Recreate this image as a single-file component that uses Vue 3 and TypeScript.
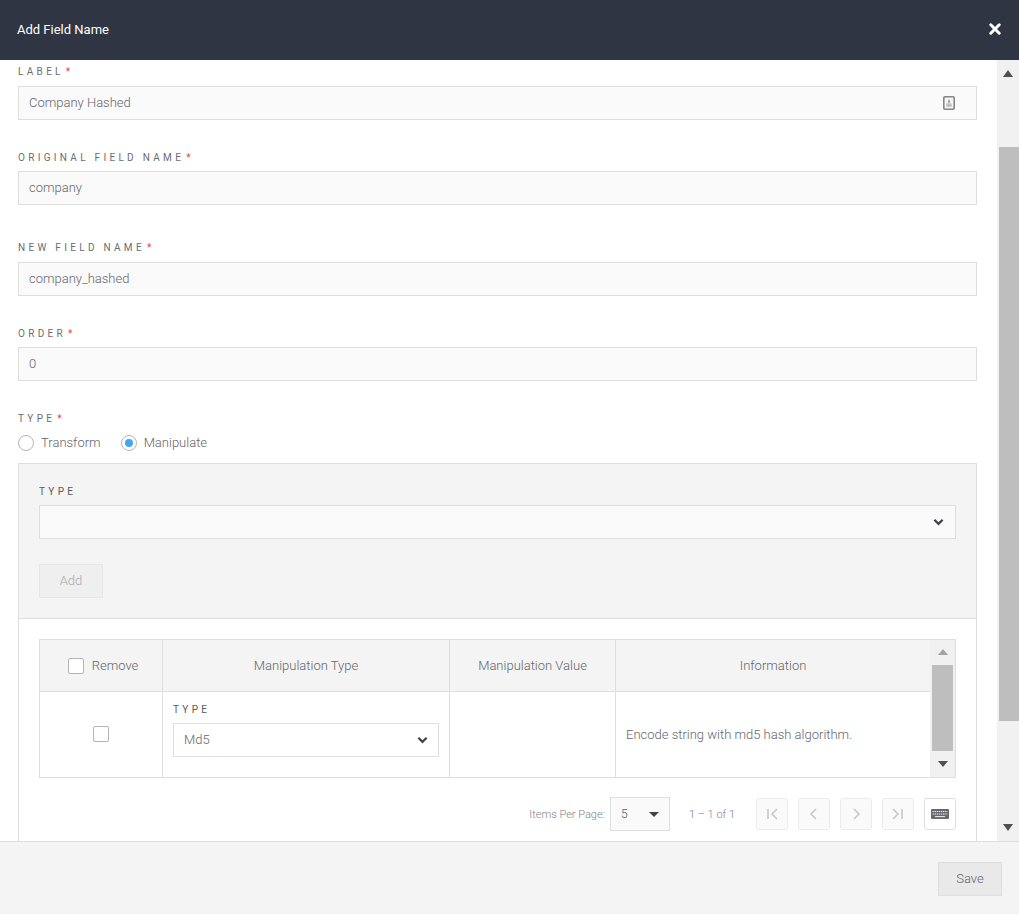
<script setup lang="ts">
const columns: string[] = ['Manipulation Type', 'Manipulation Value', 'Information']
const pagerIcons: string[] = ['M5 4v10M14 4l-5 5 5 5', 'M11 4l-5 5 5 5', 'M7 4l5 5-5 5', 'M4 4l5 5-5 5M13 4v10']
</script>

<template>
  <div class="dialog">
    <header class="head">
      <span class="title">Add Field Name</span>
      <svg class="close" viewBox="0 0 12 12" width="12" height="12"><path d="M1.8 1.8l8.4 8.4M10.2 1.8l-8.4 8.4" /></svg>
    </header>

    <div class="middle">
      <main class="content">
        <label class="field">
          <span class="lab">LABEL<i>*</i></span>
          <span class="input">
            Company Hashed
            <svg class="card" viewBox="0 0 12 14" width="12" height="14">
              <rect x=".8" y=".8" width="10.4" height="12.4" rx="1.2" fill="#f4f4f4" stroke="#858585" stroke-width="1.6" />
              <path d="M6 3l1.2 3.6H4.8z" fill="#808080" />
              <rect x="3.4" y="7.4" width="5.2" height="3.4" fill="#bdbdbd" />
            </svg>
          </span>
        </label>
        <label class="field tight wide">
          <span class="lab">ORIGINAL FIELD NAME<i>*</i></span>
          <span class="input">company</span>
        </label>
        <label class="field">
          <span class="lab">NEW FIELD NAME<i>*</i></span>
          <span class="input">company_hashed</span>
        </label>
        <label class="field tight">
          <span class="lab">ORDER<i>*</i></span>
          <span class="input">0</span>
        </label>

        <div class="lab">TYPE<i>*</i></div>
        <div class="radios">
          <span class="radio"><b class="dot"></b><span class="rtext">Transform</span></span>
          <span class="radio"><b class="dot on"></b><span class="rtext">Manipulate</span></span>
        </div>

        <section class="panel">
          <div class="panel-top">
            <div class="lab dark">TYPE</div>
            <div class="input select">
              <svg class="chev" viewBox="0 0 12 8" width="11" height="8"><path d="M1.5 1.5L6 6l4.5-4.5" /></svg>
            </div>
            <button class="add" type="button">Add</button>
          </div>
          <div class="panel-bottom">
            <div class="table">
              <div class="table-main">
                <div class="row header">
                  <div class="cell c1 remove"><b class="check"></b>Remove</div>
                  <div v-for="(c, i) in columns" :key="c" class="cell" :class="'c' + (i + 2)">{{ c }}</div>
                </div>
                <div class="row body">
                  <div class="cell c1"><b class="check solo"></b></div>
                  <div class="cell c2 typecell">
                    <div class="lab dark">TYPE</div>
                    <div class="input select white">
                      Md5
                      <svg class="chev" viewBox="0 0 12 8" width="11" height="8"><path d="M1.5 1.5L6 6l4.5-4.5" /></svg>
                    </div>
                  </div>
                  <div class="cell c3"></div>
                  <div class="cell c4 info">Encode string with md5 hash algorithm.</div>
                </div>
              </div>
              <div class="bar small">
                <span class="arrow up grey"></span>
                <div class="track"><span class="thumb"></span></div>
                <span class="arrow down"></span>
              </div>
            </div>

            <div class="pager">
              <span class="ipp">Items Per Page:</span>
              <span class="size">5<em></em></span>
              <span class="range">1 – 1 of 1</span>
              <button v-for="d in pagerIcons" :key="d" class="pg" type="button">
                <svg viewBox="0 0 18 18" width="18" height="18"><path :d="d" /></svg>
              </button>
              <button class="pg kb" type="button">
                <svg viewBox="0 0 18 10" width="18" height="10">
                  <rect width="18" height="10" rx="1" fill="#666a70" />
                  <path d="M1.5 2.5h15M1.5 5h15" stroke="#f0f0f0" stroke-width="1" stroke-dasharray="1.4 .7" />
                  <path d="M4 7.6h10" stroke="#f0f0f0" stroke-width="1" />
                </svg>
              </button>
            </div>
          </div>
        </section>
      </main>

      <div class="bar large">
        <span class="arrow up"></span>
        <div class="track"><span class="thumb"></span></div>
        <span class="arrow down"></span>
      </div>
    </div>

    <footer class="foot">
      <button class="save" type="button">Save</button>
    </footer>
  </div>
</template>

<style>
html, body { margin: 0; background: #fff; overflow: hidden; }
</style>

<style scoped>
.dialog { width: 1019px; height: 914px; display: flex; flex-direction: column; font-family: Roboto, "Liberation Sans", sans-serif; font-size: 13px; font-weight: 300; color: #63666c; }
.head { height: 60px; flex: none; background: #2f3542; display: flex; align-items: center; justify-content: space-between; padding: 0 18px 2px 17px; box-sizing: border-box; }
.title { color: #fff; font-size: 13px; font-weight: 400; }
.close { fill: none; stroke: #fff; stroke-width: 3; stroke-linecap: round; margin-bottom: 1px; }
.middle { flex: 1; min-height: 0; display: flex; overflow: hidden; }
.content { width: 997px; flex: none; box-sizing: border-box; padding: 5px 20px 0 18px; overflow: hidden; }
.field { display: block; margin-bottom: 31px; }
.field.wide { margin-bottom: 36px; }
.lab { display: block; height: 14px; line-height: 14px; font-size: 10px; font-weight: 400; letter-spacing: 3.3px; color: #6a6d73; margin-bottom: 7px; white-space: nowrap; }
.tight .lab { margin-bottom: 6px; }
.lab i { color: #e8453c; font-style: normal; margin-left: 2px; }
.lab.dark { color: #55585e; margin-bottom: 6px; }
.input { display: flex; align-items: center; justify-content: space-between; height: 34px; box-sizing: border-box; border: 1px solid #dedede; background: #fafafa; padding: 0 21px 2px 10px; }
.card { flex: none; margin-top: 2px; }
.radios { display: flex; height: 24px; margin-top: -2px; margin-bottom: 8px; align-items: center; }
.radio { display: flex; align-items: center; margin-right: 20px; }
.rtext { margin-bottom: 2px; }
.dot { width: 14px; height: 14px; border: 1px solid #b5b5b5; border-radius: 50%; margin-right: 7px; display: block; background: #fff; position: relative; }
.dot.on::after { content: ""; position: absolute; left: 3px; top: 3px; width: 8px; height: 8px; border-radius: 50%; background: #42a5f5; }
.panel { border: 1px solid #dedede; border-bottom: 0; }
.panel-top { background: #f4f4f4; padding: 21px 20px 20px; border-bottom: 1px solid #dedede; }
.select { padding-right: 11px; }
.select.white { background: #fff; padding-right: 10px; }
.chev { fill: none; stroke: #3f4349; stroke-width: 2.4; margin-left: auto; margin-top: 2px; }
.add { display: block; width: 64px; height: 34px; margin-top: 25px; background: #efefef; border: 1px solid #e6e6e6; color: #a9a9a9; font: inherit; padding: 0 0 2px; }
.panel-bottom { padding: 20px 20px 30px; background: #fff; }
.table { display: flex; height: 139px; border: 1px solid #dedede; box-sizing: border-box; }
.table-main { width: 890px; flex: none; }
.row { display: flex; }
.row.header { height: 52px; background: #f4f4f4; border-bottom: 1px solid #dedede; box-sizing: border-box; }
.row.body { height: 85px; }
.cell { display: flex; align-items: center; justify-content: center; box-sizing: border-box; border-right: 1px solid #dedede; }
.c1 { width: 123px; }
.c2 { width: 287px; }
.c3 { width: 166px; }
.c4 { width: 314px; border-right: 0; }
.remove { padding-left: 4px; }
.check { display: block; width: 14px; height: 14px; border: 1px solid #b5b5b5; border-radius: 2px; margin-right: 8px; background: #fff; }
.check.solo { margin: 0 0 1px; }
.typecell { display: block; padding: 11px 10px 0; }
.info { justify-content: flex-start; padding-left: 10px; }
.bar { background: #f1f1f1; display: flex; flex-direction: column; align-items: center; }
.bar.large { width: 22px; flex: none; }
.bar.small { width: 25px; flex: none; }
.track { flex: 1; width: 100%; display: flex; flex-direction: column; box-sizing: border-box; }
.large .track { padding: 70px 0 103px 2px; }
.small .track { padding: 0 2px; }
.thumb { flex: 1; background: #bebebe; display: block; }
.arrow { flex: none; width: 0; height: 0; border-left: 5.5px solid transparent; border-right: 5.5px solid transparent; }
.large .arrow.up { margin-top: 10px; border-bottom: 7px solid #505050; }
.large .arrow.down { margin-bottom: 10px; border-top: 7px solid #505050; }
.small .arrow.up { margin: 9px 0 10px; border-bottom: 6px solid #a3a3a3; }
.small .arrow.down { margin: 10px 0 10px; border-top: 6px solid #505050; }
.pager { display: flex; align-items: center; justify-content: flex-end; margin-top: 20px; height: 32px; font-size: 11px; color: #808389; }
.ipp { margin-right: 5px; }
.size { display: flex; align-items: center; justify-content: space-between; box-sizing: border-box; width: 60px; height: 34px; padding: 0 10px; border: 1px solid #dedede; background: #fafafa; font-size: 12px; color: #55585e; }
.size em { display: block; width: 0; height: 0; border-left: 5px solid transparent; border-right: 5px solid transparent; border-top: 5px solid #3f4349; }
.range { margin: 0 21px 0 19px; font-size: 11px; }
.pg { width: 32px; height: 32px; padding: 0; margin-left: 10px; display: flex; align-items: center; justify-content: center; background: #fafafa; border: 1px solid #ececec; border-radius: 3px; }
.range + .pg { margin-left: 0; }
.pg svg { fill: none; stroke: #c8c8c8; stroke-width: 1.6; }
.pg.kb { background: #fff; border-color: #dedede; }
.pg.kb svg { stroke: none; }
.foot { height: 73px; flex: none; background: #f4f4f4; border-top: 1px solid #dedede; box-sizing: border-box; display: flex; justify-content: flex-end; padding: 20px 17px 0 0; }
.save { width: 64px; height: 34px; background: #e9e9e9; border: 1px solid #dedede; color: #63666c; font: inherit; padding: 0 0 2px; }
</style>
